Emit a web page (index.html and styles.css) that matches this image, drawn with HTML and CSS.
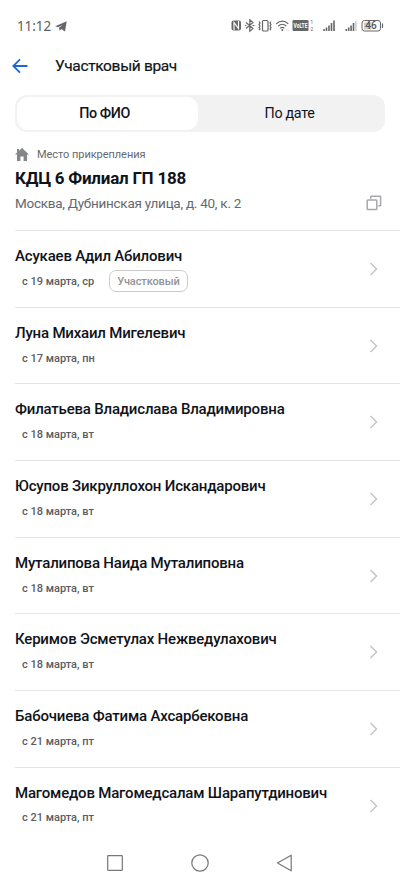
FILE: index.html
```html
<!DOCTYPE html>
<html lang="ru">
<head>
<meta charset="utf-8">
<meta name="viewport" content="width=device-width, initial-scale=1">
<title>Участковый врач</title>
<link rel="stylesheet" href="styles.css">
</head>
<body>
<svg width="0" height="0" class="defs"><symbol id="chev" viewBox="0 0 10 16"><path d="M1.5 2 7.500 8 1.500 14" fill="none" stroke="#c6c7ca" stroke-width="1.600"/></symbol></svg>
<div class="status">
  <span class="clock">11:12</span>
  <svg class="plane" width="12" height="11" viewBox="0 0 12 11"><path d="M.2 5.2 11.7.3 10 10.4 6.3 7.9 4.6 9.8 4 6.800 7.500 4 3 6.300Z" fill="#666"/></svg>
  <svg class="signals" width="154" height="14" viewBox="230 19 154 14" fill="none" stroke="#666">
    <rect x="231.500" y="20.500" width="9.500" height="10" rx="2" fill="#666" stroke="none"/>
    <path d="M234 30V22.500L238.500 28.500V21" stroke="#fff" stroke-width="1.100"/>
    <path d="M246 22.500 253 28.500 249.800 31.200V19.800L253 22.500 246 28.500M245 25.500h1.500M252.500 25.500H254.500" stroke-width="1.200"/>
    <rect x="262.500" y="20.500" width="5.500" height="10.500" rx="1" stroke-width="1.200"/>
    <path d="M259 21.500l1 1.500-1 1.500 1 1.500-1 1.500 1 1.500-1 1M271 21.500l-1 1.500 1 1.500-1 1.500 1 1.500-1 1.500 1 1" stroke-width="1.200"/>
    <path d="M276.300 23.700Q282.300 18.500 288.300 23.700M278.300 26Q282.300 22.500 286.300 26M280.200 28.200Q282.300 26.400 284.400 28.200" stroke-width="1.200"/>
    <circle cx="282.300" cy="30" r="1" fill="#666" stroke="none"/>
    <path d="M286 30h3" stroke="#ccc" stroke-width=".7"/>
    <rect x="292.500" y="20" width="16" height="11" rx="1.300" fill="#666" stroke="none"/>
    <g stroke="none" font-family="Roboto, sans-serif">
      <text x="293.600" y="27.900" font-size="6.500" font-weight="700" fill="#fff" textLength="13.800" lengthAdjust="spacingAndGlyphs">VoLTE</text>
      <text x="310.500" y="23.900" font-size="4.500" fill="#555">1</text>
      <text x="310.500" y="31.300" font-size="4.500" fill="#555">2</text>
    </g>
    <path d="M324 31v-2M326.500 31v-3.500M329 31v-5.500M331.500 31v-8M334 31V20.500M346.300 31v-2M348.700 31v-3.500M351.100 31v-5.500M353.500 31v-8" stroke-width="1.600"/>
    <path d="M355.900 31V21" stroke="#c8c8c8" stroke-width="1.400"/>
    <rect x="364" y="22.500" width="7.500" height="7" fill="#ccc" stroke="none"/>
    <rect x="362" y="20.500" width="18.500" height="10.500" rx="2.500"/>
    <path d="M382.500 23.500v4.500" stroke-width="1.200"/>
    <text x="365.300" y="29.400" font-family="Roboto, sans-serif" font-size="10" font-weight="500" fill="#555" stroke="none">46</text>
  </svg>
</div>
<header class="bar">
  <svg width="16" height="16" viewBox="0 0 16 16"><path d="M15.500 8H1.500M8 1.300 1.300 8 8 14.700" fill="none" stroke="#1c67d8" stroke-width="1.800"/></svg>
  <h1>Участковый врач</h1>
</header>
<nav class="tabs"><div class="tab active">По ФИО</div><div class="tab">По дате</div></nav>
<section class="place">
  <div class="label"><svg width="14" height="13" viewBox="0 0 14 13"><path d="M7 0 14 6.500H12V13H8.600V8.500H5.400V13H2V6.500H0L2 4.600V1h2v1.800Z" fill="#85868a"/></svg><span>Место прикрепления</span></div>
  <h2>КДЦ 6 Филиал ГП 188</h2>
  <div class="address"><span>Москва, Дубнинская улица, д. 40, к. 2</span>
    <svg width="16" height="16" viewBox="0 0 16 16" fill="none" stroke="#a6a7aa" stroke-width="1.500"><rect x="1.200" y="5" width="9.600" height="9.600" rx=".8"/><path d="M4.800 3.700V1.700Q4.800 1.200 5.300 1.200H14Q14.600 1.200 14.600 1.800V10.300Q14.600 10.800 14.100 10.800H12.200"/></svg>
  </div>
</section>
<main class="list">
  <article class="row"><div><h3>Асукаев Адил Абилович</h3><p><span>с 19 марта, ср</span><b class="badge">Участковый</b></p></div><svg class="chev"><use href="#chev"/></svg></article>
  <article class="row"><div><h3>Луна Михаил Мигелевич</h3><p><span>с 17 марта, пн</span></p></div><svg class="chev"><use href="#chev"/></svg></article>
  <article class="row"><div><h3>Филатьева Владислава Владимировна</h3><p><span>с 18 марта, вт</span></p></div><svg class="chev"><use href="#chev"/></svg></article>
  <article class="row"><div><h3>Юсупов Зикруллохон Искандарович</h3><p><span>с 18 марта, вт</span></p></div><svg class="chev"><use href="#chev"/></svg></article>
  <article class="row"><div><h3>Муталипова Наида Муталиповна</h3><p><span>с 18 марта, вт</span></p></div><svg class="chev"><use href="#chev"/></svg></article>
  <article class="row"><div><h3>Керимов Эсметулах Нежведулахович</h3><p><span>с 18 марта, вт</span></p></div><svg class="chev"><use href="#chev"/></svg></article>
  <article class="row"><div><h3>Бабочиева Фатима Ахсарбековна</h3><p><span>с 21 марта, пт</span></p></div><svg class="chev"><use href="#chev"/></svg></article>
  <article class="row"><div><h3>Магомедов Магомедсалам Шарапутдинович</h3><p><span>с 21 марта, пт</span></p></div><svg class="chev"><use href="#chev"/></svg></article>
</main>
<footer class="sysnav">
  <svg width="18" height="18" viewBox="0 0 18 18"><rect x="1.700" y="1.700" width="14.600" height="14.600" rx=".5"/></svg>
  <svg width="18" height="18" viewBox="0 0 18 18"><circle cx="9" cy="9" r="8.200"/></svg>
  <svg width="18" height="18" viewBox="0 0 18 18"><path d="M15.200 1.200V16.800L1.500 9Z" stroke-linejoin="round"/></svg>
</footer>
</body>
</html>
```
FILE: styles.css
```css
* { box-sizing: border-box; margin: 0; padding: 0; }
body { width: 400px; height: 884px; overflow: hidden; background: #fff; color: #10131a; font-family: Roboto, "Noto Sans", sans-serif; display: flex; flex-direction: column; }
svg { display: block; flex: none; }
.defs { position: absolute; }
.status { height: 50px; padding: 2px 16px 0 17px; display: flex; align-items: center; color: #606060; }
.clock { font: 400 13.5px "Noto Sans", sans-serif; width: 34px; letter-spacing: -0.1px; white-space: nowrap; }
.plane { margin-left: 4px; }
.signals { margin-left: auto; }
.bar { height: 32px; padding-left: 12px; display: flex; align-items: center; gap: 27px; }
.bar h1 { font-size: 15.5px; line-height: 20px; font-weight: 400; letter-spacing: -0.35px; -webkit-text-stroke: 0.2px; }
.tabs { margin: 13px 15px 0; height: 37px; padding: 2px; border-radius: 12px; background: #f2f2f2; display: flex; }
.tab { flex: 1; border-radius: 11px; display: grid; place-items: center; font-size: 14.3px; letter-spacing: -0.3px; padding: 0 2px 1px 0; }
.tab.active { flex: 0 0 181px; background: #fff; font-weight: 500; letter-spacing: -0.4px; padding-right: 6px; }
.place { height: 98px; padding: 14px 18px 0 15px; }
.label { height: 17px; display: flex; align-items: center; gap: 8px; font-size: 11px; letter-spacing: -0.05px; color: #66686d; }
.place h2 { font-size: 17px; line-height: 22px; font-weight: 700; letter-spacing: -0.24px; margin-top: 4px; }
.address { display: flex; justify-content: space-between; align-items: center; height: 20px; margin-top: 4px; font-size: 13.5px; letter-spacing: -0.26px; color: #66686d; }
.list { flex: none; }
.row { height: 76.67px; margin-left: 15px; border-top: 1px solid #e4e4e6; padding: 15px 21px 0 0; display: flex; justify-content: space-between; }
.row h3 { font-size: 15px; line-height: 20px; font-weight: 500; letter-spacing: -0.19px; white-space: nowrap; }
.row p { height: 22px; margin: 4.4px 0 0 7px; display: flex; align-items: center; font-size: 11px; font-weight: 500; color: #5a5c61; }
.badge { margin-left: 15px; height: 22px; padding: 0 7px; border: 1px solid #ccc; border-radius: 7px; font-weight: 500; letter-spacing: -0.1px; line-height: 21px; color: #929397; }
.chev { width: 10px; height: 16px; margin-top: 15px; }
.sysnav { height: 40px; padding: 0 106px; display: flex; justify-content: space-between; align-items: center; }
.sysnav svg { fill: none; stroke: #777; stroke-width: 1.2; }
```
